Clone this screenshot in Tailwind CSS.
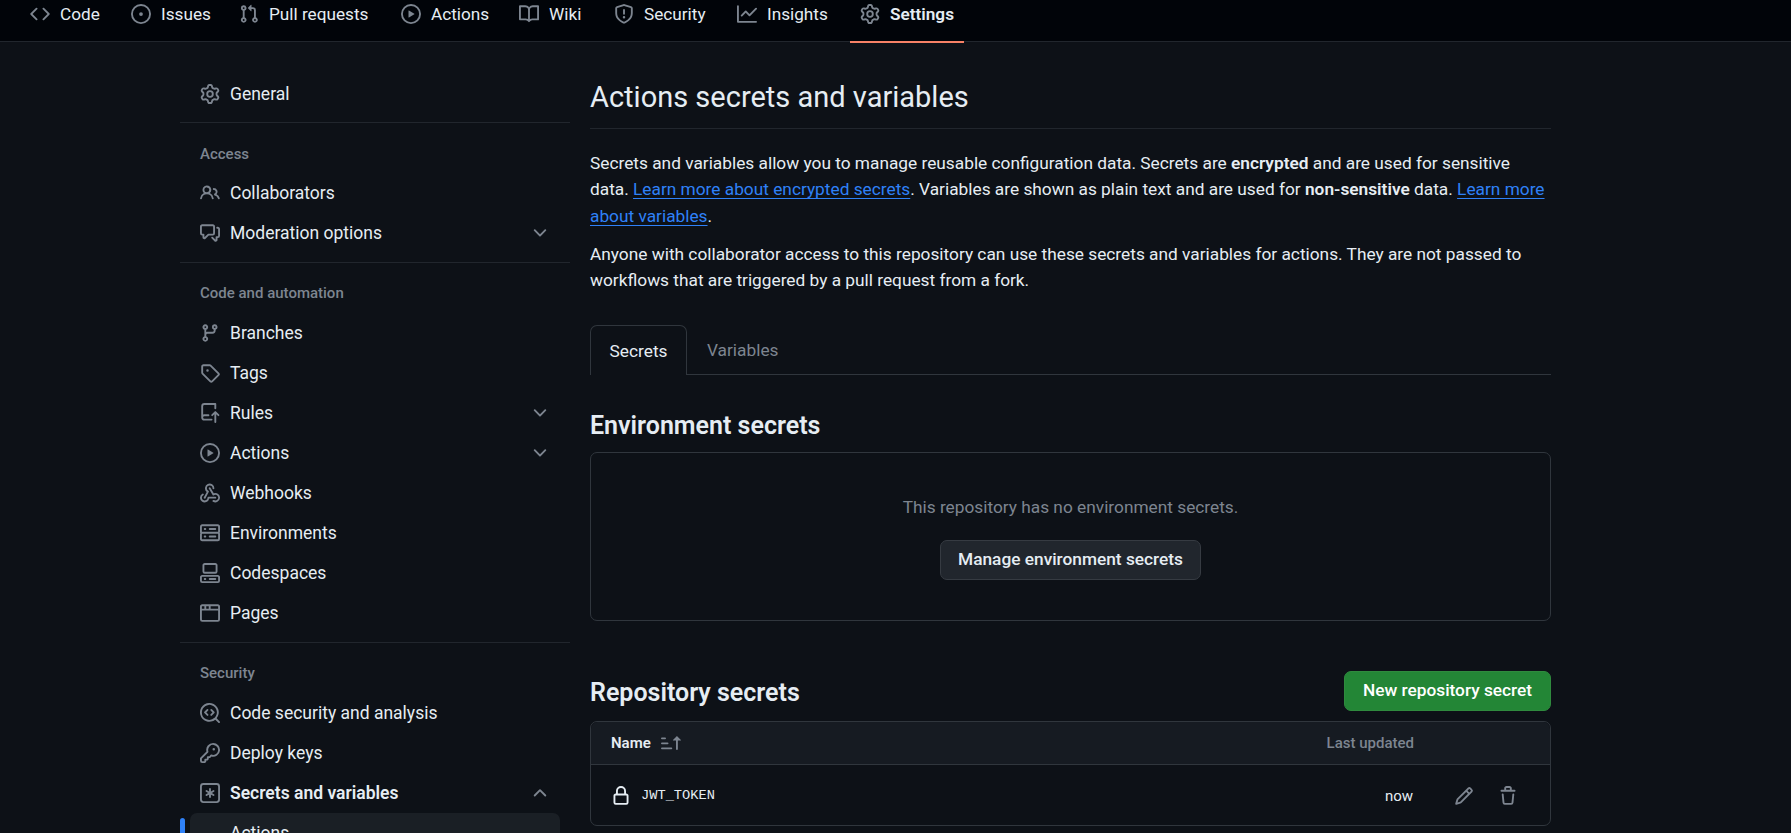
<!DOCTYPE html>
<html lang="en">
  <head>
    <meta charset="UTF-8" />
    <title>Actions secrets and variables</title>
    <script src="https://cdn.jsdelivr.net/npm/@tailwindcss/browser@4"></script>
  </head>
  <body class="h-[833px] overflow-hidden bg-[#0d1117] font-['Roboto',sans-serif] text-[17.5px] text-[#e6edf3]">
    <svg class="hidden">
      <symbol id="gear" viewBox="0 0 16 16"><path d="M8 0a8.2 8.2 0 0 1 .701.031C9.444.095 9.99.645 10.16 1.29l.288 1.107c.018.066.079.158.212.224.231.114.454.243.668.386.123.082.233.09.299.071l1.103-.303c.644-.176 1.392.021 1.82.63.27.385.506.792.704 1.218.315.675.111 1.422-.364 1.891l-.814.806c-.049.048-.098.147-.088.294.016.257.016.515 0 .772-.01.147.038.246.088.294l.814.806c.475.469.679 1.216.364 1.891a7.977 7.977 0 0 1-.704 1.217c-.428.61-1.176.807-1.82.63l-1.102-.302c-.067-.019-.177-.011-.3.071a5.909 5.909 0 0 1-.668.386c-.133.066-.194.158-.211.224l-.29 1.106c-.168.646-.715 1.196-1.458 1.26a8.006 8.006 0 0 1-1.402 0c-.743-.064-1.289-.614-1.458-1.26l-.289-1.106c-.018-.066-.079-.158-.212-.224a5.738 5.738 0 0 1-.668-.386c-.123-.082-.233-.09-.299-.071l-1.103.303c-.644.176-1.392-.021-1.82-.63a8.12 8.12 0 0 1-.704-1.218c-.315-.675-.111-1.422.363-1.891l.815-.806c.05-.048.098-.147.088-.294a6.214 6.214 0 0 1 0-.772c.01-.147-.038-.246-.088-.294l-.815-.806C.635 6.045.431 5.298.746 4.623a7.92 7.92 0 0 1 .704-1.217c.428-.61 1.176-.807 1.82-.63l1.102.302c.067.019.177.011.3-.071.214-.143.437-.272.668-.386.133-.066.194-.158.211-.224l.29-1.106C6.009.645 6.556.095 7.299.03 7.53.01 7.764 0 8 0Zm-.571 1.525c-.036.003-.108.036-.137.146l-.289 1.105c-.147.561-.549.967-.998 1.189-.173.086-.34.183-.5.29-.417.278-.97.423-1.529.27l-1.103-.303c-.109-.03-.175.016-.195.045-.22.312-.412.644-.573.99-.014.031-.021.11.059.19l.815.806c.411.406.562.957.53 1.456a4.709 4.709 0 0 0 0 .582c.032.499-.119 1.05-.53 1.456l-.815.806c-.081.08-.073.159-.059.19.162.346.353.677.573.989.02.03.085.076.195.046l1.102-.303c.56-.153 1.113-.008 1.53.27.161.107.328.204.501.29.447.222.85.629.997 1.189l.289 1.105c.029.109.101.143.137.146a6.6 6.6 0 0 0 1.142 0c.036-.003.108-.036.137-.146l.289-1.105c.147-.561.549-.967.998-1.189.173-.086.34-.183.5-.29.417-.278.97-.423 1.529-.27l1.103.303c.109.029.175-.016.195-.045.22-.313.411-.644.573-.99.014-.031.021-.11-.059-.19l-.815-.806c-.411-.406-.562-.957-.53-1.456a4.709 4.709 0 0 0 0-.582c-.032-.499.119-1.05.53-1.456l.815-.806c.081-.08.073-.159.059-.19a6.464 6.464 0 0 0-.573-.989c-.02-.03-.085-.076-.195-.046l-1.102.303c-.56.153-1.113.008-1.53-.27a4.44 4.44 0 0 0-.501-.29c-.447-.222-.85-.629-.997-1.189l-.289-1.105c-.029-.11-.101-.143-.137-.146a6.6 6.6 0 0 0-1.142 0ZM11 8a3 3 0 1 1-6 0 3 3 0 0 1 6 0ZM9.5 8a1.5 1.5 0 1 0-3.001.001A1.5 1.5 0 0 0 9.5 8Z"/></symbol>
      <symbol id="play" viewBox="0 0 16 16"><path d="M8 0a8 8 0 1 1 0 16A8 8 0 0 1 8 0ZM1.5 8a6.5 6.5 0 1 0 13 0 6.5 6.5 0 0 0-13 0Zm4.879-2.773 4.264 2.559a.25.25 0 0 1 0 .428l-4.264 2.559A.25.25 0 0 1 6 10.559V5.442a.25.25 0 0 1 .379-.215Z"/></symbol>
      <symbol id="chevron-down" viewBox="0 0 16 16"><path d="M12.78 5.22a.749.749 0 0 1 0 1.06l-4.25 4.25a.749.749 0 0 1-1.06 0L3.22 6.28a.749.749 0 1 1 1.06-1.06L8 8.939l3.72-3.719a.749.749 0 0 1 1.06 0Z"/></symbol>
    </svg>

    <!-- repo tabs -->
    <nav class="flex h-[42px] gap-2.5 whitespace-nowrap border-b border-[#21262d] bg-[#010409] pl-5 text-[17.2px] leading-[28px]">
      <a class="flex h-7 items-center gap-2.5 px-2.5">
        <svg class="size-5 fill-[#7d8590]" viewBox="0 0 16 16"><path d="m11.28 3.22 4.25 4.25a.75.75 0 0 1 0 1.06l-4.25 4.25a.749.749 0 0 1-1.275-.326.749.749 0 0 1 .215-.734L13.94 8l-3.72-3.72a.749.749 0 0 1 .326-1.275.749.749 0 0 1 .734.215Zm-6.56 0a.751.751 0 0 1 1.042.018.751.751 0 0 1 .018 1.042L2.06 8l3.72 3.72a.749.749 0 0 1-.326 1.275.749.749 0 0 1-.734-.215L.47 8.53a.75.75 0 0 1 0-1.06Z"/></svg>
        <span class="w-[41px]">Code</span>
      </a>
      <a class="flex h-7 items-center gap-2.5 px-2.5">
        <svg class="size-5 fill-[#7d8590]" viewBox="0 0 16 16"><path d="M8 9.5a1.5 1.5 0 1 0 0-3 1.5 1.5 0 0 0 0 3Z"/><path d="M8 0a8 8 0 1 1 0 16A8 8 0 0 1 8 0ZM1.5 8a6.5 6.5 0 1 0 13 0 6.5 6.5 0 0 0-13 0Z"/></svg>
        <span class="w-[48px]">Issues</span>
      </a>
      <a class="flex h-7 items-center gap-2.5 px-2.5">
        <svg class="size-5 fill-[#7d8590]" viewBox="0 0 16 16"><path d="M1.5 3.25a2.25 2.25 0 1 1 3 2.122v5.256a2.251 2.251 0 1 1-1.5 0V5.372A2.25 2.25 0 0 1 1.5 3.25Zm5.677-.177L9.573.677A.25.25 0 0 1 10 .854V2.5h1A2.5 2.5 0 0 1 13.5 5v5.628a2.251 2.251 0 1 1-1.5 0V5a1 1 0 0 0-1-1h-1v1.646a.25.25 0 0 1-.427.177L7.177 3.427a.25.25 0 0 1 0-.354ZM3.75 2.5a.75.75 0 1 0 0 1.5.75.75 0 0 0 0-1.5Zm0 9.5a.75.75 0 1 0 0 1.5.75.75 0 0 0 0-1.5Zm8.25.75a.75.75 0 1 0 1.5 0 .75.75 0 0 0-1.5 0Z"/></svg>
        <span class="w-[102px]">Pull requests</span>
      </a>
      <a class="flex h-7 items-center gap-2.5 px-2.5">
        <svg class="size-5 fill-[#7d8590]"><use href="#play"/></svg>
        <span class="w-[58px]">Actions</span>
      </a>
      <a class="flex h-7 items-center gap-2.5 px-2.5">
        <svg class="size-5 fill-[#7d8590]" viewBox="0 0 16 16"><path d="M0 1.75A.75.75 0 0 1 .75 1h4.253c1.227 0 2.317.59 3 1.501A3.743 3.743 0 0 1 11.006 1h4.245a.75.75 0 0 1 .75.75v10.5a.75.75 0 0 1-.75.75h-4.507a2.25 2.25 0 0 0-1.591.659l-.622.621a.75.75 0 0 1-1.06 0l-.622-.621A2.25 2.25 0 0 0 5.258 13H.75a.75.75 0 0 1-.75-.75Zm7.251 10.324.004-5.073-.002-2.253A2.25 2.25 0 0 0 5.003 2.5H1.5v9h3.757a3.75 3.75 0 0 1 1.994.574ZM8.755 4.75l-.004 7.322a3.752 3.752 0 0 1 1.992-.572H14.5v-9h-3.495a2.25 2.25 0 0 0-2.25 2.25Z"/></svg>
        <span class="w-[35px]">Wiki</span>
      </a>
      <a class="flex h-7 items-center gap-2.5 px-2.5">
        <svg class="size-5 fill-[#7d8590]" viewBox="0 0 16 16"><path d="M7.467.133a1.748 1.748 0 0 1 1.066 0l5.25 1.68A1.75 1.75 0 0 1 15 3.48V7c0 1.566-.32 3.182-1.303 4.682-.983 1.498-2.585 2.813-5.032 3.855a1.697 1.697 0 0 1-1.33 0c-2.447-1.042-4.049-2.357-5.032-3.855C1.32 10.182 1 8.566 1 7V3.48a1.75 1.75 0 0 1 1.217-1.667Zm.61 1.429a.25.25 0 0 0-.153 0l-5.25 1.68a.25.25 0 0 0-.174.238V7c0 1.358.275 2.666 1.057 3.86.784 1.194 2.121 2.34 4.366 3.297a.196.196 0 0 0 .154 0c2.245-.956 3.582-2.104 4.366-3.298C13.225 9.666 13.5 8.36 13.5 7V3.48a.251.251 0 0 0-.174-.237l-5.25-1.68ZM8.75 4.75v3a.75.75 0 0 1-1.5 0v-3a.75.75 0 0 1 1.5 0ZM9 10.5a1 1 0 1 1-2 0 1 1 0 0 1 2 0Z"/></svg>
        <span class="w-[63px]">Security</span>
      </a>
      <a class="flex h-7 items-center gap-2.5 px-2.5">
        <svg class="size-5 fill-[#7d8590]" viewBox="0 0 16 16"><path d="M1.5 1.75V13.5h13.75a.75.75 0 0 1 0 1.5H.75a.75.75 0 0 1-.75-.75V1.75a.75.75 0 0 1 1.5 0Zm14.28 2.53-5.25 5.25a.75.75 0 0 1-1.06 0L7 7.06 4.28 9.78a.751.751 0 0 1-1.042-.018.751.751 0 0 1-.018-1.042l3.25-3.25a.75.75 0 0 1 1.06 0L10 7.94l4.72-4.72a.751.751 0 0 1 1.042.018.751.751 0 0 1 .018 1.042Z"/></svg>
        <span class="w-[63px]">Insights</span>
      </a>
      <a class="relative flex h-7 items-center gap-2.5 px-2.5 font-semibold">
        <svg class="size-5 fill-[#7d8590]"><use href="#gear"/></svg>
        <span class="w-[64px]">Settings</span>
        <span class="absolute inset-x-0 top-[41px] h-0.5 bg-[#f78166]"></span>
      </a>
    </nav>

    <div class="flex gap-5 pl-[180px] pt-8">
      <!-- settings sidebar -->
      <aside class="w-[390px] shrink-0">
        <a class="flex h-10 items-center gap-2.5 px-5">
          <svg class="size-5 fill-[#7d8590]"><use href="#gear"/></svg>General
        </a>
        <div class="mt-2 border-t border-[#21262d] px-5 pb-[9px] pt-[21px] text-[15px] font-medium leading-5 text-[#7d8590]">Access</div>
        <a class="flex h-10 items-center gap-2.5 px-5">
          <svg class="size-5 fill-[#7d8590]" viewBox="0 0 16 16"><path d="M2 5.5a3.5 3.5 0 1 1 5.898 2.549 5.508 5.508 0 0 1 3.034 4.084.75.75 0 1 1-1.482.235 4 4 0 0 0-7.9 0 .75.75 0 0 1-1.482-.236A5.507 5.507 0 0 1 3.102 8.05 3.493 3.493 0 0 1 2 5.5ZM11 4a3.001 3.001 0 0 1 2.22 5.018 5.01 5.01 0 0 1 2.56 3.012.749.749 0 0 1-.885.954.752.752 0 0 1-.549-.514 3.507 3.507 0 0 0-2.522-2.372.75.75 0 0 1-.574-.73v-.352a.75.75 0 0 1 .416-.672A1.5 1.5 0 0 0 11 5.5.75.75 0 0 1 11 4Zm-5.5-.5a2 2 0 1 0-.001 3.999A2 2 0 0 0 5.5 3.5Z"/></svg>Collaborators
        </a>
        <a class="flex h-10 items-center gap-2.5 px-5">
          <svg class="size-5 fill-[#7d8590]" viewBox="0 0 16 16"><path d="M1.75 1h8.5c.966 0 1.75.784 1.75 1.75v5.5A1.75 1.75 0 0 1 10.25 10H7.061l-2.574 2.573A1.458 1.458 0 0 1 2 11.543V10h-.25A1.75 1.75 0 0 1 0 8.25v-5.5C0 1.784.784 1 1.75 1ZM1.5 2.75v5.5c0 .138.112.25.25.25h1a.75.75 0 0 1 .75.75v2.19l2.72-2.72a.749.749 0 0 1 .53-.22h3.5a.25.25 0 0 0 .25-.25v-5.5a.25.25 0 0 0-.25-.25h-8.5a.25.25 0 0 0-.25.25Zm13 2a.25.25 0 0 0-.25-.25h-.5a.75.75 0 0 1 0-1.5h.5c.966 0 1.75.784 1.75 1.75v5.5A1.75 1.75 0 0 1 14.25 12H14v1.543a1.458 1.458 0 0 1-2.487 1.03L9.22 12.28a.749.749 0 0 1 .326-1.275.749.749 0 0 1 .734.215l2.22 2.22v-2.19a.75.75 0 0 1 .75-.75h1a.25.25 0 0 0 .25-.25Z"/></svg>Moderation options
          <svg class="ml-auto size-5 fill-[#7d8590]"><use href="#chevron-down"/></svg>
        </a>
        <div class="mt-[9px] border-t border-[#21262d] px-5 pb-2.5 pt-5 text-[15px] font-medium leading-5 text-[#7d8590]">Code and automation</div>
        <a class="flex h-10 items-center gap-2.5 px-5">
          <svg class="size-5 fill-[#7d8590]" viewBox="0 0 16 16"><path d="M9.5 3.25a2.25 2.25 0 1 1 3 2.122V6A2.5 2.5 0 0 1 10 8.5H6a1 1 0 0 0-1 1v1.128a2.251 2.251 0 1 1-1.5 0V5.372a2.25 2.25 0 1 1 1.5 0v1.836A2.493 2.493 0 0 1 6 7h4a1 1 0 0 0 1-1v-.628A2.25 2.25 0 0 1 9.5 3.25Zm-6 0a.75.75 0 1 0 1.5 0 .75.75 0 0 0-1.5 0Zm8.25-.75a.75.75 0 1 0 0 1.5.75.75 0 0 0 0-1.5ZM4.25 12a.75.75 0 1 0 0 1.5.75.75 0 0 0 0-1.5Z"/></svg>Branches
        </a>
        <a class="flex h-10 items-center gap-2.5 px-5">
          <svg class="size-5 fill-[#7d8590]" viewBox="0 0 16 16"><path d="M1 7.775V2.75C1 1.784 1.784 1 2.75 1h5.025c.464 0 .91.184 1.238.513l6.25 6.25a1.75 1.75 0 0 1 0 2.474l-5.026 5.026a1.75 1.75 0 0 1-2.474 0l-6.25-6.25A1.752 1.752 0 0 1 1 7.775Zm1.5 0c0 .066.026.13.073.177l6.25 6.25a.25.25 0 0 0 .354 0l5.025-5.025a.25.25 0 0 0 0-.354l-6.25-6.25a.25.25 0 0 0-.177-.073H2.75a.25.25 0 0 0-.25.25ZM6 5a1 1 0 1 1 0 2 1 1 0 0 1 0-2Z"/></svg>Tags
        </a>
        <a class="flex h-10 items-center gap-2.5 px-5">
          <svg class="size-5 fill-[#7d8590]" viewBox="0 0 16 16"><path d="M1 2.5A2.5 2.5 0 0 1 3.5 0h8.75a.75.75 0 0 1 .75.75v3.5a.75.75 0 0 1-1.5 0V1.5h-8a1 1 0 0 0-1 1v6.708A2.493 2.493 0 0 1 3.5 9h3.25a.75.75 0 0 1 0 1.5H3.5a1 1 0 0 0 0 2h5.75a.75.75 0 0 1 0 1.5H3.5A2.5 2.5 0 0 1 1 11.5Zm13.23 7.79h-.001l-1.224-1.224v6.184a.75.75 0 0 1-1.5 0V9.066L10.28 10.29a.75.75 0 0 1-1.06-1.061l2.505-2.504a.75.75 0 0 1 1.06 0L15.29 9.23a.751.751 0 0 1-.018 1.042.751.751 0 0 1-1.042.018Z"/></svg>Rules
          <svg class="ml-auto size-5 fill-[#7d8590]"><use href="#chevron-down"/></svg>
        </a>
        <a class="flex h-10 items-center gap-2.5 px-5">
          <svg class="size-5 fill-[#7d8590]"><use href="#play"/></svg>Actions
          <svg class="ml-auto size-5 fill-[#7d8590]"><use href="#chevron-down"/></svg>
        </a>
        <a class="flex h-10 items-center gap-2.5 px-5">
          <svg class="size-5 fill-[#7d8590]" viewBox="0 0 16 16"><path d="M5.5 4.25a2.25 2.25 0 0 1 4.5 0 .75.75 0 0 0 1.5 0 3.75 3.75 0 1 0-6.14 2.889l-2.272 4.258a.75.75 0 0 0 1.324.706L7 7.25a.75.75 0 0 0-.309-1.015A2.25 2.25 0 0 1 5.5 4.25Z"/><path d="M7.364 3.607a.75.75 0 0 1 1.03.257l2.608 4.349a3.75 3.75 0 1 1-.628 6.785.75.75 0 0 1 .752-1.299 2.25 2.25 0 1 0-.033-3.88.75.75 0 0 1-1.03-.256L7.107 4.636a.75.75 0 0 1 .257-1.03Z"/><path d="M2.9 8.776A.75.75 0 0 1 2.625 9.8 2.25 2.25 0 1 0 6 11.75a.75.75 0 0 1 .75-.751h5.5a.75.75 0 0 1 0 1.5H7.425a3.751 3.751 0 1 1-5.55-3.998.75.75 0 0 1 1.024.274Z"/></svg>Webhooks
        </a>
        <a class="flex h-10 items-center gap-2.5 px-5">
          <svg class="size-5 fill-[#7d8590]" viewBox="0 0 16 16"><path d="M1.75 1h12.5c.966 0 1.75.784 1.75 1.75v4c0 .372-.116.717-.314 1 .198.283.314.628.314 1v4a1.75 1.75 0 0 1-1.75 1.75H1.75A1.75 1.75 0 0 1 0 13.25v-4c0-.372.116-.717.314-1a1.739 1.739 0 0 1-.314-1v-4C0 1.784.784 1 1.75 1ZM1.5 2.75v4c0 .138.112.25.25.25h12.5a.25.25 0 0 0 .25-.25v-4a.25.25 0 0 0-.25-.25H1.75a.25.25 0 0 0-.25.25Zm.25 5.75a.25.25 0 0 0-.25.25v4c0 .138.112.25.25.25h12.5a.25.25 0 0 0 .25-.25v-4a.25.25 0 0 0-.25-.25ZM7 4.75A.75.75 0 0 1 7.75 4h4.5a.75.75 0 0 1 0 1.5h-4.5A.75.75 0 0 1 7 4.75ZM7.75 10h4.5a.75.75 0 0 1 0 1.5h-4.5a.75.75 0 0 1 0-1.5ZM3 4.75A.75.75 0 0 1 3.75 4h.5a.75.75 0 0 1 0 1.5h-.5A.75.75 0 0 1 3 4.75ZM3.75 10h.5a.75.75 0 0 1 0 1.5h-.5a.75.75 0 0 1 0-1.5Z"/></svg>Environments
        </a>
        <a class="flex h-10 items-center gap-2.5 px-5">
          <svg class="size-5 fill-[#7d8590]" viewBox="0 0 16 16"><path d="M0 11.25c0-.966.784-1.75 1.75-1.75h12.5c.966 0 1.75.784 1.75 1.75v3A1.75 1.75 0 0 1 14.25 16H1.75A1.75 1.75 0 0 1 0 14.25Zm2-9.5C2 .784 2.784 0 3.75 0h8.5C13.216 0 14 .784 14 1.75v5a1.75 1.75 0 0 1-1.75 1.75h-8.5A1.75 1.75 0 0 1 2 6.75Zm1.75-.25a.25.25 0 0 0-.25.25v5c0 .138.112.25.25.25h8.5a.25.25 0 0 0 .25-.25v-5a.25.25 0 0 0-.25-.25Zm-2 9.5a.25.25 0 0 0-.25.25v3c0 .138.112.25.25.25h12.5a.25.25 0 0 0 .25-.25v-3a.25.25 0 0 0-.25-.25Z"/><path d="M7 12.75a.75.75 0 0 1 .75-.75h4.5a.75.75 0 0 1 0 1.5h-4.5a.75.75 0 0 1-.75-.75Zm-4 0a.75.75 0 0 1 .75-.75h.5a.75.75 0 0 1 0 1.5h-.5a.75.75 0 0 1-.75-.75Z"/></svg>Codespaces
        </a>
        <a class="flex h-10 items-center gap-2.5 px-5">
          <svg class="size-5 fill-[#7d8590]" viewBox="0 0 16 16"><path d="M0 2.75C0 1.784.784 1 1.75 1h12.5c.966 0 1.75.784 1.75 1.75v10.5A1.75 1.75 0 0 1 14.25 15H1.75A1.75 1.75 0 0 1 0 13.25ZM14.5 6h-13v7.25c0 .138.112.25.25.25h12.5a.25.25 0 0 0 .25-.25Zm-6-3.5v2h6V2.75a.25.25 0 0 0-.25-.25ZM5 2.5v2h2v-2Zm-3.25 0a.25.25 0 0 0-.25.25V4.5h2v-2Z"/></svg>Pages
        </a>
        <div class="mt-[9px] border-t border-[#21262d] px-5 pb-2.5 pt-5 text-[15px] font-medium leading-5 text-[#7d8590]">Security</div>
        <a class="flex h-10 items-center gap-2.5 px-5">
          <svg class="size-5 fill-[#7d8590]" viewBox="0 0 16 16"><path d="M8.47 4.97a.75.75 0 0 0 0 1.06L9.94 7.5 8.47 8.97a.75.75 0 1 0 1.06 1.06l2-2a.75.75 0 0 0 0-1.06l-2-2a.75.75 0 0 0-1.06 0ZM6.53 6.03a.75.75 0 0 0-1.06-1.06l-2 2a.75.75 0 0 0 0 1.06l2 2a.75.75 0 1 0 1.06-1.06L5.06 7.5l1.47-1.47Z"/><path d="M12.246 13.307a7.501 7.501 0 1 1 1.06-1.06l2.474 2.473a.749.749 0 0 1-.326 1.275.749.749 0 0 1-.734-.215ZM1.5 7.5a6.002 6.002 0 0 0 3.608 5.504 6.002 6.002 0 0 0 6.486-1.117.748.748 0 0 1 .292-.293A6 6 0 1 0 1.5 7.5Z"/></svg>Code security and analysis
        </a>
        <a class="flex h-10 items-center gap-2.5 px-5">
          <svg class="size-5 fill-[#7d8590]" viewBox="0 0 16 16"><path d="M10.5 0a5.499 5.499 0 1 1-1.288 10.848l-.932.932a.749.749 0 0 1-.53.22H7v.75a.749.749 0 0 1-.22.53l-.5.5a.749.749 0 0 1-.53.22H5v.75a.749.749 0 0 1-.22.53l-.5.5a.749.749 0 0 1-.53.22h-2A1.75 1.75 0 0 1 0 14.25v-2c0-.199.079-.389.22-.53l4.932-4.932A5.5 5.5 0 0 1 10.5 0Zm-4 5.5c-.001.431.069.86.205 1.269a.75.75 0 0 1-.181.768L1.5 12.56v1.69c0 .138.112.25.25.25h1.69l.06-.06v-1.19a.75.75 0 0 1 .75-.75h1.19l.06-.06v-1.19a.75.75 0 0 1 .75-.75h1.19l1.023-1.025a.75.75 0 0 1 .768-.18A4 4 0 1 0 6.5 5.5ZM11 6a1 1 0 1 1 0-2 1 1 0 0 1 0 2Z"/></svg>Deploy keys
        </a>
        <a class="flex h-10 items-center gap-2.5 px-5 font-semibold">
          <svg class="size-5 fill-[#7d8590]" viewBox="0 0 16 16"><path d="M0 2.75A2.75 2.75 0 0 1 2.75 0h10.5A2.75 2.75 0 0 1 16 2.75v10.5A2.75 2.75 0 0 1 13.25 16H2.75A2.75 2.75 0 0 1 0 13.25ZM2.75 1.5c-.69 0-1.25.56-1.25 1.25v10.5c0 .69.56 1.25 1.25 1.25h10.5c.69 0 1.25-.56 1.25-1.25V2.75c0-.69-.56-1.25-1.25-1.25Z"/><path d="M8 4a.75.75 0 0 1 .75.75V6.7l1.69-.975a.75.75 0 0 1 .75 1.3L9.5 8l1.69.976a.75.75 0 0 1-.75 1.298L8.75 9.3v1.95a.75.75 0 0 1-1.5 0V9.3l-1.69.975a.751.751 0 0 1-1.025-.275.75.75 0 0 1 .275-1.024L6.5 8l-1.69-.975a.75.75 0 0 1 .75-1.3l1.69.976V4.75A.75.75 0 0 1 8 4Z"/></svg>Secrets and variables
          <svg class="ml-auto size-5 fill-[#7d8590]" viewBox="0 0 16 16"><path d="M3.22 10.53a.749.749 0 0 1 0-1.06l4.25-4.25a.749.749 0 0 1 1.06 0l4.25 4.25a.749.749 0 1 1-1.06 1.06L8 6.811 4.28 10.53a.749.749 0 0 1-1.06 0Z"/></svg>
        </a>
        <a class="relative mx-2.5 flex h-10 items-center rounded-[7px] bg-[#1a1f25] pl-10">
          <span class="absolute -left-2.5 top-[5px] h-[30px] w-[5px] rounded-[5px] bg-[#2f81f7]"></span>Actions
        </a>
      </aside>

      <!-- page content -->
      <main class="w-[961px] shrink-0 text-[17.3px]">
        <h2 class="border-b border-[#21262d] pb-[11px] pt-[3px] text-[29px] leading-10">Actions secrets and variables</h2>
        <p class="mt-[21px] whitespace-nowrap leading-[26.25px]">Secrets and variables allow you to manage reusable configuration data. Secrets are <b class="font-semibold">encrypted</b> and are used for sensitive<br />data. <a class="text-[#2f81f7] underline underline-offset-3">Learn more about encrypted secrets</a>. Variables are shown as plain text and are used for <b class="font-semibold">non-sensitive</b> data. <a class="text-[#2f81f7] underline underline-offset-3">Learn more<br />about variables</a>.</p>
        <p class="mt-3 whitespace-nowrap leading-[26.25px]">Anyone with collaborator access to this repository can use these secrets and variables for actions. They are not passed to<br />workflows that are triggered by a pull request from a fork.</p>

        <div class="mt-8 flex h-[50px] border-b border-[#30363d]">
          <a class="flex h-[50px] w-[97px] items-center justify-center rounded-t-[7px] border border-b-0 border-[#30363d] bg-[#0d1117] pt-0.5">Secrets</a>
          <a class="flex h-[50px] items-center px-5 pt-0.5 text-[#7d8590]">Variables</a>
        </div>

        <h3 class="mt-[36px] text-[25px] font-semibold leading-[30px]">Environment secrets</h3>
        <div class="mt-[11px] flex h-[169px] flex-col items-center rounded-[7px] border border-[#30363d] pt-[41px]">
          <p class="leading-[26px] text-[#7d8590]">This repository has no environment secrets.</p>
          <button class="mt-[20px] h-10 rounded-[7px] border border-[#363b42] bg-[#21262d] px-[17px] font-medium">Manage environment secrets</button>
        </div>

        <div class="mt-[50px] flex items-center justify-between">
          <h3 class="pt-1 text-[25px] font-semibold leading-[30px]">Repository secrets</h3>
          <button class="h-10 w-[207px] rounded-[7px] border border-[#2f8a3e] bg-[#238636] font-medium text-white">New repository secret</button>
        </div>
        <div class="mt-2.5 rounded-[7px] border border-[#30363d]">
          <div class="flex h-[43px] items-center rounded-t-[7px] border-b border-[#30363d] bg-[#161b22] pl-5 pr-[136px] text-[15px]">
            <span class="font-semibold">Name</span>
            <svg class="ml-[10px] size-5 fill-[#7d8590]" viewBox="0 0 16 16"><path d="m12.927 2.573 3 3A.25.25 0 0 1 15.75 6H13.5v6.75a.75.75 0 0 1-1.5 0V6H9.75a.25.25 0 0 1-.177-.427l3-3a.25.25 0 0 1 .354 0ZM0 12.25a.75.75 0 0 1 .75-.75h7.5a.75.75 0 0 1 0 1.5H.75a.75.75 0 0 1-.75-.75Zm0-4a.75.75 0 0 1 .75-.75h4.5a.75.75 0 0 1 0 1.5H.75A.75.75 0 0 1 0 8.25Zm0-4a.75.75 0 0 1 .75-.75h2.5a.75.75 0 0 1 0 1.5H.75A.75.75 0 0 1 0 4.25Z"/></svg>
            <span class="ml-auto font-medium text-[#7d8590]">Last updated</span>
          </div>
          <div class="flex h-[60px] items-center pl-5 pr-[32px] pt-0.5">
            <svg class="size-5 fill-[#e6edf3]" viewBox="0 0 16 16"><path d="M4 4a4 4 0 0 1 8 0v2h.25c.966 0 1.75.784 1.75 1.75v5.5A1.75 1.75 0 0 1 12.25 15h-8.5A1.75 1.75 0 0 1 2 13.25v-5.5C2 6.784 2.784 6 3.75 6H4Zm8.25 3.5h-8.5a.25.25 0 0 0-.25.25v5.5c0 .138.112.25.25.25h8.5a.25.25 0 0 0 .25-.25v-5.5a.25.25 0 0 0-.25-.25ZM10.5 6V4a2.5 2.5 0 1 0-5 0v2Z"/></svg>
            <span class="ml-2.5 font-['Liberation_Mono',monospace] text-[13.7px]">JWT_TOKEN</span>
            <span class="ml-auto text-[15px]">now</span>
            <svg class="ml-[41px] size-5 fill-[#7d8590]" viewBox="0 0 16 16"><path d="M11.013 1.427a1.75 1.75 0 0 1 2.474 0l1.086 1.086a1.75 1.75 0 0 1 0 2.474l-8.61 8.61c-.21.21-.47.364-.756.445l-3.251.93a.75.75 0 0 1-.927-.928l.929-3.25c.081-.286.235-.547.445-.758l8.61-8.61Zm.176 4.823L9.75 4.81l-6.286 6.287a.253.253 0 0 0-.064.108l-.558 1.953 1.953-.558a.253.253 0 0 0 .108-.064Zm1.238-3.763a.25.25 0 0 0-.354 0L10.811 3.75l1.439 1.44 1.263-1.263a.25.25 0 0 0 0-.354Z"/></svg>
            <svg class="ml-[24px] size-5 fill-[#7d8590]" viewBox="0 0 16 16"><path d="M11 1.75V3h2.25a.75.75 0 0 1 0 1.5H2.75a.75.75 0 0 1 0-1.5H5V1.75C5 .784 5.784 0 6.75 0h2.5C10.216 0 11 .784 11 1.75ZM4.496 6.675l.66 6.6a.25.25 0 0 0 .249.225h5.19a.25.25 0 0 0 .249-.225l.66-6.6a.75.75 0 0 1 1.492.149l-.66 6.6A1.748 1.748 0 0 1 10.595 15h-5.19a1.75 1.75 0 0 1-1.741-1.575l-.66-6.6a.75.75 0 1 1 1.492-.15ZM6.5 1.75V3h3V1.75a.25.25 0 0 0-.25-.25h-2.5a.25.25 0 0 0-.25.25Z"/></svg>
          </div>
        </div>
      </main>
    </div>
  </body>
</html>
